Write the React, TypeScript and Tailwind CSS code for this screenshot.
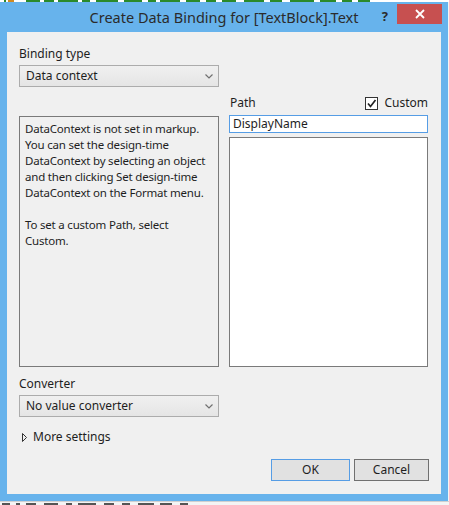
import React from 'react';

const font = "font-['Segoe_UI','Noto_Sans',sans-serif]";

const Chevron: React.FC = () => (
  <svg width="8" height="5" viewBox="0 0 8 5" className="shrink-0">
    <path d="M0.5 0.5 L4 4 L7.5 0.5" fill="none" stroke="#707070" strokeWidth="1.2" />
  </svg>
);

const ComboBox: React.FC<{ value: string }> = ({ value }) => (
  <div className="flex h-[22px] w-[200px] items-center justify-between border border-[#acacac] bg-gradient-to-b from-[#f0f0f0] to-[#e5e5e5] pl-[6px] pr-[5px] text-[12px] text-[#1e1e1e]">
    <span>{value}</span>
    <Chevron />
  </div>
);

// fragments of the code editor visible behind the dialog
const topBits = [
  [4, 2, '#2b8a2b'], [8, 6, '#d08a20'], [26, 14, '#2b8a2b'], [44, 10, '#2b8a2b'], [58, 20, '#2b8a2b'],
  [82, 8, '#2b8a2b'], [96, 22, '#2b8a2b'], [124, 18, '#2b8a2b'], [148, 8, '#2b8a2b'], [160, 20, '#2b8a2b'],
  [186, 14, '#2b8a2b'], [206, 10, '#2b8a2b'], [222, 14, '#2b8a2b'], [244, 20, '#2b8a2b'], [270, 12, '#2b8a2b'],
  [290, 24, '#2b8a2b'], [320, 16, '#2b8a2b'], [342, 10, '#2b8a2b'], [358, 12, '#2b8a2b'],
] as const;

const bottomBits = [
  [2, 8], [16, 4], [26, 10], [44, 14], [66, 6], [78, 18], [104, 10], [122, 8], [138, 16], [160, 12], [180, 8],
] as const;

const App: React.FC = () => {
  return (
    <div className={`relative h-[505px] w-[449px] overflow-hidden bg-[#f4f4f4] ${font}`}>
      <div className="relative h-[2px] bg-white">
        {topBits.map(([x, w, c], i) => (
          <span key={i} className="absolute top-0 h-[2px]" style={{ left: x, width: w, background: c }} />
        ))}
      </div>

      {/* dialog window */}
      <div className="flex w-[448px] flex-col bg-[#67b3ec] px-[7px] pb-[7px]">
        <div className="relative flex h-[30px] items-center justify-center">
          <span className="mt-[2px] text-[14.5px] text-[#2b2b2b]">Create Data Binding for [TextBlock].Text</span>
          <span className="absolute right-[53px] top-[5px] text-[13px] font-bold text-[#2b2b2b]">?</span>
          <div className="absolute right-[-1px] top-[2px] flex h-[20px] w-[45px] items-center justify-center bg-[#c75050]">
            <svg width="10" height="10" viewBox="0 0 10 10">
              <path d="M1 1 L9 9 M9 1 L1 9" stroke="#fff" strokeWidth="1.8" />
            </svg>
          </div>
        </div>

        <div className="flex h-[462px] flex-col bg-[#f0f0f0] pl-[12px] pr-[13px] pt-[14px] text-[12px] text-[#1e1e1e]">
          <div className="flex gap-[10px]">
            <div className="flex w-[200px] flex-col">
              <div className="h-4 leading-4">Binding type</div>
              <div className="mt-[3px]">
                <ComboBox value="Data context" />
              </div>
              <div className="mt-[29px] h-[251px] whitespace-nowrap border border-[#7a7a7a] px-[5px] pt-[4px] text-[11.5px] leading-4 tracking-[-0.2px]">
                <p>
                  DataContext is not set in markup.
                  <br />
                  You can set the design-time
                  <br />
                  DataContext by selecting an object
                  <br />
                  and then clicking Set design-time
                  <br />
                  DataContext on the Format menu.
                </p>
                <p className="mt-4">
                  To set a custom Path, select
                  <br />
                  Custom.
                </p>
              </div>
            </div>

            <div className="flex w-[199px] flex-col justify-end">
              <div className="flex h-4 items-center justify-between leading-4">
                <span className="pl-[1px]">Path</span>
                <span className="flex items-center gap-[6px]">
                  <span className="flex h-[13px] w-[13px] items-center justify-center border border-[#333] bg-white">
                    <svg width="11" height="11" viewBox="0 0 11 11">
                      <path d="M2 5.5 L4.5 8.5 L9.5 2" fill="none" stroke="#222" strokeWidth="1.7" />
                    </svg>
                  </span>
                  <span>Custom</span>
                </span>
              </div>
              <div className="mt-[4px] flex h-[18px] items-center border border-[#569de5] bg-white pl-[3px]">DisplayName</div>
              <div className="mt-[4px] h-[230px] border border-[#7a7a7a] bg-white" />
            </div>
          </div>

          <div className="flex w-[200px] flex-col">
            <div className="mt-[9px] h-4 leading-4">Converter</div>
            <div className="mt-[3px]">
              <ComboBox value="No value converter" />
            </div>
            <div className="mt-[12px] flex h-4 items-center gap-[6px] pl-[3px] leading-4">
              <svg width="5" height="9" viewBox="0 0 5 9">
                <path d="M0.5 0.5 L4.5 4.5 L0.5 8.5 Z" fill="none" stroke="#333" strokeWidth="1" />
              </svg>
              <span>More settings</span>
            </div>
          </div>

          <div className="-mr-[1px] mt-[14px] flex justify-end gap-[4px]">
            <button className="h-[22px] w-[79px] border border-[#569de5] bg-[#e1e1e1] text-[12px] text-[#1e1e1e]">OK</button>
            <button className="h-[22px] w-[75px] border border-[#707070] bg-[#e1e1e1] text-[12px] text-[#1e1e1e]">Cancel</button>
          </div>
        </div>
      </div>

      <div className="relative h-[4px] border-t border-[#d0d0d0]">
        {bottomBits.map(([x, w], i) => (
          <span key={i} className="absolute top-[1px] h-[3px] bg-[#555]" style={{ left: x, width: w }} />
        ))}
      </div>
    </div>
  );
};

export default App;
